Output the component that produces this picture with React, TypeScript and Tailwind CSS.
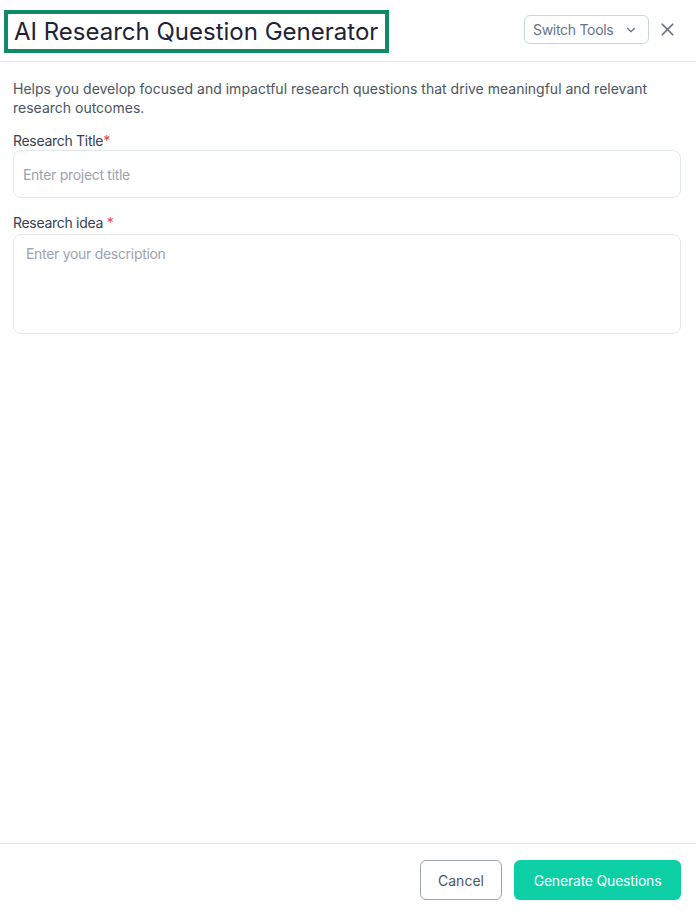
import { ChevronDown, X } from "lucide-react";

export default function App() {
  return (
    <div className="flex h-[914px] w-[696px] flex-col bg-white font-['Inter',sans-serif] text-[#1e293b]">
      <header className="flex h-[62px] shrink-0 items-start justify-between border-b border-[#e5e7eb] pl-[4px] pr-[18px] pt-[10px]">
        <div className="flex h-[43px] items-center border-[4px] border-[#138a67] pl-[6px] pr-[7px]">
          <h1 className="text-[24px] font-normal leading-none tracking-[0px] text-[#1e2235]">
            AI Research Question Generator
          </h1>
        </div>
        <div className="flex items-center gap-[8px] pt-[5px]">
          <button
            type="button"
            className="flex h-[29px] w-[125px] items-center justify-between rounded-md border border-[#cbd5e1] pl-[8px] pr-[10px] text-[14px] tracking-[-0.3px] text-[#64748b]"
          >
            Switch Tools
            <ChevronDown className="h-[14px] w-[14px]" strokeWidth={2} />
          </button>
          <X className="h-[21px] w-[21px] text-[#6b7280]" strokeWidth={2} />
        </div>
      </header>

      <main className="flex flex-1 flex-col pl-[13px] pr-[15px] pt-[17px]">
        <p className="text-[14px] leading-[19px] tracking-[0px] text-[#4b5563]">
          Helps you develop focused and impactful research questions that drive
          meaningful and relevant research outcomes.
        </p>

        <label className="mt-[15px] text-[14px] leading-[18px] tracking-[-0.3px] text-[#374151]">
          Research Title<span className="text-[#ef4444]">*</span>
        </label>
        <input
          placeholder="Enter project title"
          className="mt-[0px] h-[48px] w-full rounded-lg border border-[#e2e8f0] px-[9px] text-[14px] tracking-[-0.3px] outline-none placeholder:text-[#9ca3af]"
        />

        <label className="mt-[16px] text-[14px] leading-[18px] tracking-[-0.3px] text-[#374151]">
          Research idea <span className="text-[#ef4444]">*</span>
        </label>
        <textarea
          placeholder="Enter your description"
          className="mt-[2px] h-[100px] w-full resize-none rounded-lg border border-[#e5e7eb] px-[12px] py-[8px] text-[14px] tracking-[-0.3px] outline-none placeholder:text-[#9ca3af]"
        />
      </main>

      <footer className="flex h-[71px] shrink-0 items-start justify-end gap-[12px] border-t border-[#e5e7eb] pr-[15px] pt-[16px]">
        <button
          type="button"
          className="h-[40px] w-[82px] rounded-md border border-[#9ca3af] text-[14px] text-[#4b5563]"
        >
          Cancel
        </button>
        <button
          type="button"
          className="h-[40px] w-[167px] rounded-md bg-[#0ccfa6] text-[14px] tracking-[-0.2px] text-white"
        >
          Generate Questions
        </button>
      </footer>
    </div>
  );
}
